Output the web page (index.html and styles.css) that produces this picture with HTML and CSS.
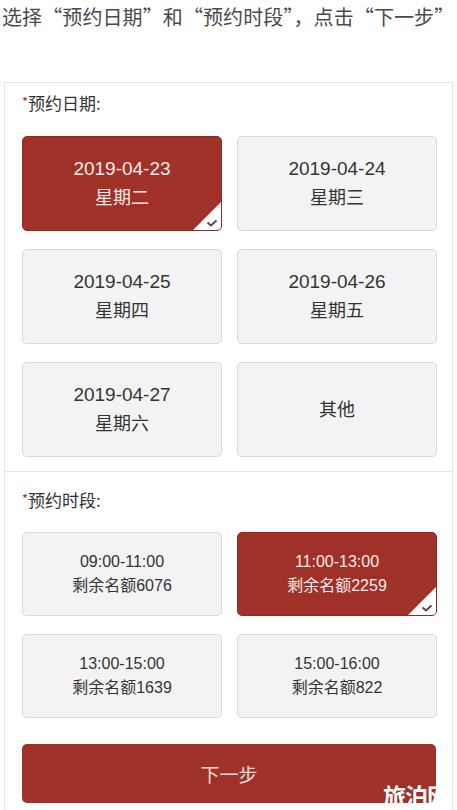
FILE: index.html
```html
<!DOCTYPE html>
<html lang="zh">
<head>
<meta charset="utf-8">
<title>预约</title>
<link rel="stylesheet" href="styles.css">
</head>
<body>
<p class="intro">选择“预约日期”和“预约时段”，点击“下一步”</p>
<div class="panel">
  <section class="section section-date">
    <div class="label"><span class="star">*</span>预约日期:</div>
    <div class="grid">
      <div class="card date selected">
        <div class="l1">2019-04-23</div><div class="l2">星期二</div>
        <svg class="tick" width="30" height="30" viewBox="0 0 30 30"><polygon points="30,0 30,30 0,30" fill="#fff"/><path d="M29.5 3 V26 Q29.5 29.5 26 29.5 H3" fill="none" stroke="#6b6b6b" stroke-width="1"/><path d="M15.5 21.5 L19 24.5 L24.5 19.5" fill="none" stroke="#5a4644" stroke-width="2"/></svg>
      </div>
      <div class="card date"><div class="l1">2019-04-24</div><div class="l2">星期三</div></div>
      <div class="card date"><div class="l1">2019-04-25</div><div class="l2">星期四</div></div>
      <div class="card date"><div class="l1">2019-04-26</div><div class="l2">星期五</div></div>
      <div class="card date"><div class="l1">2019-04-27</div><div class="l2">星期六</div></div>
      <div class="card date"><div class="l2">其他</div></div>
    </div>
  </section>
  <section class="section section-time">
    <div class="label"><span class="star">*</span>预约时段:</div>
    <div class="grid">
      <div class="card time"><div>09:00-11:00</div><div>剩余名额6076</div></div>
      <div class="card time selected"><div>11:00-13:00</div><div>剩余名额2259</div>
        <svg class="tick" width="30" height="30" viewBox="0 0 30 30"><polygon points="30,0 30,30 0,30" fill="#fff"/><path d="M29.5 3 V26 Q29.5 29.5 26 29.5 H3" fill="none" stroke="#6b6b6b" stroke-width="1"/><path d="M15.5 21.5 L19 24.5 L24.5 19.5" fill="none" stroke="#5a4644" stroke-width="2"/></svg>
      </div>
      <div class="card time"><div>13:00-15:00</div><div>剩余名额1639</div></div>
      <div class="card time"><div>15:00-16:00</div><div>剩余名额822</div></div>
    </div>
    <div class="next">下一步</div>
  </section>
</div>
<div class="watermark"><span>旅泊网</span></div>
</body>
</html>
```
FILE: styles.css
```css
* { box-sizing: border-box; }
html, body { margin: 0; padding: 0; background: #fff; }
body {
  width: 457px;
  height: 810px;
  overflow: hidden;
  position: relative;
  font-family: "Liberation Sans", "Noto Sans CJK SC", sans-serif;
  color: #333;
}
.intro {
  margin: 0;
  padding-left: 2px;
  height: 82px;
  line-height: 34px;
  font-size: 20px;
  font-family: "Noto Sans CJK SC", sans-serif;
  color: #4a4a4a;
  white-space: nowrap;
  letter-spacing: 0.1px;
}
.panel {
  margin: 0 4px;
  border: 1px solid #e4e4e4;
  border-bottom: none;
  height: 728px;
}
.section { padding: 0 16px 0 17px; }
.section-date {
  padding-top: 8px;
  padding-bottom: 14px;
  border-bottom: 1px solid #e6e6e6;
}
.section-time { padding-top: 16px; }
.label {
  font-size: 17px;
  line-height: 22px;
  color: #333;
  font-family: "Noto Sans CJK SC", sans-serif;
}
.star {
  color: #b0302a;
  font-size: 13px;
  vertical-align: 3px;
}
.grid {
  display: grid;
  grid-template-columns: 200px 200px;
  column-gap: 15px;
  row-gap: 18px;
}
.section-date .grid { margin-top: 22px; }
.section-time .grid { margin-top: 21px; }
.card {
  position: relative;
  background: #f3f3f3;
  border: 1px solid #d9d9d9;
  border-radius: 5px;
  display: flex;
  flex-direction: column;
  align-items: center;
  justify-content: center;
  color: #333;
  overflow: hidden;
}
.card.date { height: 95px; }
.card.date .l1 { font-size: 19px; line-height: 28px; }
.card.date .l2 { font-size: 18px; line-height: 30px; }
.card.time { height: 84px; font-size: 16px; line-height: 24px; }
.card.selected {
  background: #9f3128;
  border-color: #8e2b23;
  color: #faeceb;
}
.tick {
  position: absolute;
  right: -1px;
  bottom: -1px;
  display: block;
}
.next {
  margin-top: 26px;
  height: 59px;
  background: #9f3128;
  border-radius: 5px;
  color: #f4dcd8;
  font-size: 19px;
  font-family: "Noto Sans CJK SC", sans-serif;
  display: flex;
  align-items: center;
  justify-content: center;
}
.watermark {
  position: absolute;
  left: 383px;
  top: 781px;
  width: 54px;
  height: 29px;
  overflow: hidden;
  white-space: nowrap;
}
.watermark span {
  font-family: "Noto Sans CJK SC", sans-serif;
  font-weight: 700;
  font-size: 23px;
  line-height: 29px;
  color: #fff;
  letter-spacing: -1px;
}
```
